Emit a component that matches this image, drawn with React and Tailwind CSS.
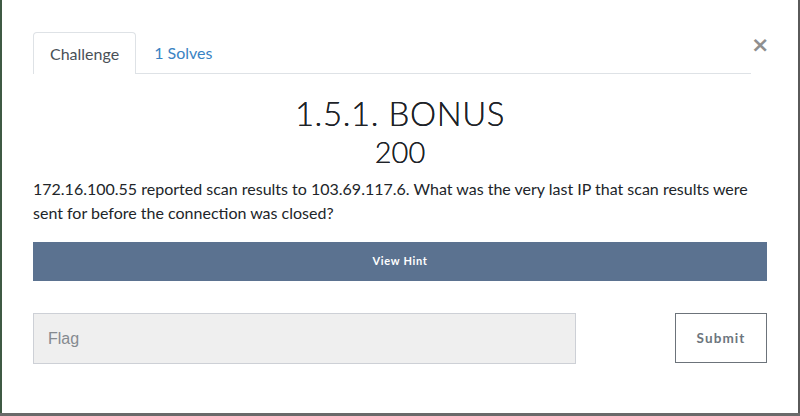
import React from "react";

const App = () => {
  return (
    <div className="w-[800px] h-[416px] bg-[#6a6a6a] overflow-hidden font-['Lato',sans-serif]">
      <div className="flex h-[413px]">
        <div className="w-[2px] bg-[#3f5a44]"></div>
        <div className="flex-1 bg-white px-[31px] pt-[32px]">
          {/* header with tabs */}
          <div className="flex items-start">
            <div className="flex flex-1 border-b border-[#dee2e6] h-[42px]">
              <div className="h-[42px] px-[16px] pt-[11px] border border-b-0 border-[#dee2e6] rounded-t-[4px] bg-white text-[16px] leading-[20px] text-[#495057] -mb-px">
                Challenge
              </div>
              <div className="h-[42px] px-[18px] pt-[11px] text-[16px] leading-[20px] text-[#3983c3]">
                1 Solves
              </div>
            </div>
            <button className="w-[16px] mt-[3px] text-[22px] leading-[20px] font-bold text-[#8f8f8f] font-['DejaVu_Sans',sans-serif] text-center">
              ×
            </button>
          </div>

          <h1 className="mt-[19px] text-center text-[33px] leading-[40px] tracking-[0.6px] text-[#1f2328] font-['Lato',sans-serif] font-light [text-shadow:0_0_0.4px_#1f2328]">
            1.5.1. BONUS
          </h1>
          <h2 className="mt-[1px] text-center text-[29px] leading-[36px] text-[#1f2328] font-light [text-shadow:0_0_0.5px_#1f2328]">
            200
          </h2>

          <p className="mt-[7px] text-[16px] leading-[24px] text-[#212529] pr-[10px]">
            172.16.100.55 reported scan results to 103.69.117.6. What was the very last IP that scan results were sent for before the connection was closed?
          </p>

          <button className="mt-[17px] w-full h-[39px] bg-[#5b7290] text-white text-[11px] font-bold tracking-[0.7px]">
            View Hint
          </button>

          <div className="mt-[32px] flex items-start justify-between">
            <input
              placeholder="Flag"
              className="w-[543px] h-[51px] bg-[#efefef] border border-[#cdd0d6] px-[14px] text-[16px] font-['Liberation_Sans',sans-serif] placeholder:text-[#858a90] outline-none"
            />
            <button className="w-[92px] h-[50px] border border-[#6c737a] bg-white text-[13.5px] font-bold tracking-[1.1px] text-[#6c757d]">
              Submit
            </button>
          </div>
        </div>
        <div className="w-[2px] bg-[#5a5a5a]"></div>
      </div>
    </div>
  );
};

export default App;
